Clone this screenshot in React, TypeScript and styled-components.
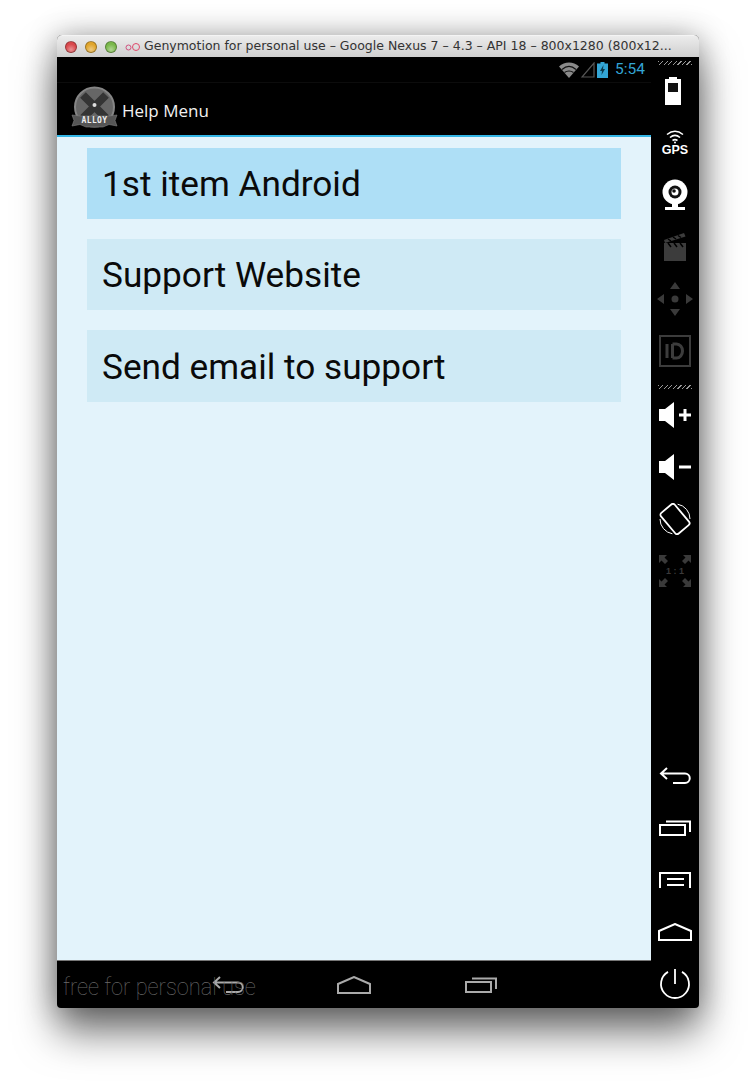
import React from 'react'
import styled, { createGlobalStyle } from 'styled-components'

const GlobalStyle = createGlobalStyle`
  html, body {
    margin: 0;
    padding: 0;
    background: #fff;
    overflow: hidden;
  }
`

const Page = styled.div`
  width: 756px;
  height: 1087px;
  box-sizing: border-box;
  padding: 35px 57px 79px 57px;
`

const Window = styled.div`
  height: 973px;
  display: flex;
  flex-direction: column;
  border-radius: 5px 5px 4px 4px;
  background: #000;
  box-shadow: 0 24px 40px rgba(0, 0, 0, 0.55), 0 0 30px rgba(0, 0, 0, 0.3);
`

const TitleBar = styled.div`
  height: 22px;
  flex: none;
  display: flex;
  align-items: center;
  padding-left: 8px;
  border-radius: 5px 5px 0 0;
  background: linear-gradient(#ececec, #cfcfcf);
  border-top: 1px solid #f4f4f4;
  box-sizing: border-box;
`

const Light = styled.span<{ $tone: string }>`
  width: 12px;
  height: 12px;
  margin-right: 8px;
  border-radius: 50%;
  box-sizing: border-box;
  border: 1px solid rgba(0, 0, 0, 0.3);
  background: radial-gradient(circle at 50% 75%, #fff6 0, transparent 60%),
    ${({ $tone }) => $tone};
`

const TitleText = styled.span`
  margin-left: 3px;
  font: 12.5px/1 'DejaVu Sans', sans-serif;
  color: #333;
  white-space: nowrap;
`

const Body = styled.div`
  flex: 1;
  display: flex;
  min-height: 0;
`

const Screen = styled.div`
  width: 594px;
  flex: none;
  display: flex;
  flex-direction: column;
`

const StatusBar = styled.div`
  height: 26px;
  flex: none;
  display: flex;
  align-items: center;
  justify-content: flex-end;
  gap: 2px;
  padding-right: 6px;
  box-sizing: border-box;
  border-bottom: 1px solid #0c0c0c;
`

const Clock = styled.span`
  margin-left: 5px;
  font: 15.5px/1 Roboto, sans-serif;
  color: #33a5d5;
`

const ActionBar = styled.div`
  height: 54px;
  flex: none;
  display: flex;
  align-items: center;
  gap: 4px;
  padding-left: 14px;
  box-sizing: border-box;
  border-bottom: 2px solid #33b5e5;
`

const ActionTitle = styled.span`
  padding-top: 2px;
  font: 17px/1 'Open Sans', sans-serif;
  color: #f2f2f2;
`

const Content = styled.div`
  flex: 1;
  display: flex;
  flex-direction: column;
  gap: 20px;
  padding: 11px 30px;
  background: #e3f3fb;
`

const MenuItem = styled.div<{ $active?: boolean; $tall?: boolean }>`
  height: ${({ $tall }) => ($tall ? 72 : 71)}px;
  box-sizing: border-box;
  display: flex;
  align-items: center;
  padding: 3px 0 0 15px;
  background: ${({ $active }) => ($active ? '#aedff6' : '#cfeaf5')};
  font: 35.2px/1 Roboto, sans-serif;
  color: #0a0a0a;
`

const NavBar = styled.div`
  position: relative;
  height: 48px;
  flex: none;
  display: flex;
  align-items: center;
  justify-content: center;
  border-top: 1px solid #777;
  box-sizing: border-box;
`

const NavSlot = styled.div`
  width: 126.5px;
  display: flex;
  justify-content: center;
`

const Watermark = styled.span`
  position: absolute;
  left: 6px;
  top: 14px;
  font: 100 24px/1 Roboto, sans-serif;
  color: #6a6a6a;
  white-space: nowrap;
  transform: scaleX(0.91);
  transform-origin: left center;
`

const SidePanel = styled.div`
  width: 48px;
  flex: none;
  display: flex;
  flex-direction: column;
  align-items: center;
  border-radius: 0 0 4px 0;
`

const Grip = styled.div<{ $height: number }>`
  height: ${({ $height }) => $height}px;
  width: 34px;
  flex: none;
  background: repeating-linear-gradient(
      135deg,
      #999 0 1px,
      transparent 1px 3.2px
    )
    bottom / 100% 4px no-repeat;
`

const SideSlot = styled.div`
  height: 52px;
  flex: none;
  display: flex;
  align-items: center;
  justify-content: center;
`

const BottomGroup = styled.div`
  margin-top: auto;
  margin-bottom: -2px;
  display: flex;
  flex-direction: column;
  align-items: center;
`

const GpsText = styled.text`
  font: bold 12.5px 'Liberation Sans', sans-serif;
  fill: #fff;
`

const LogoText = styled.text`
  font: bold 8px 'DejaVu Sans Mono', monospace;
  fill: #eee;
  letter-spacing: 0.4px;
`

const OneToOne = styled.text`
  font: bold 9px 'Liberation Sans', sans-serif;
  fill: #3a3a3a;
`

const AlloyLogo = () => (
  <svg width="47" height="46" viewBox="0 0 47 46">
    <circle cx="23.500" cy="21" r="19.500" fill="#666" stroke="#858585" strokeWidth="2" />
    <path d="M12 9l23 23M35 9L12 32" stroke="#343434" strokeWidth="8" />
    <circle cx="23.500" cy="19" r="2" fill="#ddd" />
    <path d="M1 29l8 1h29l8-1-2 5.500 2 5.500-8-1.500-6 2.500H15l-6-2.500L1 40l2-5.500z" fill="#555" stroke="#808080" strokeWidth=".6" />
    <LogoText x="23.500" y="37" textAnchor="middle">ALLOY</LogoText>
  </svg>
)

const WifiIcon = () => (
  <svg width="20" height="16" viewBox="0 0 20 16">
    <path d="M0 4.500C5.500 -1 14.500 -1 20 4.500L10 16z" fill="#8a8a8a" />
    <path d="M3 7.500C7.500 3.500 12.500 3.500 17 7.500M5.500 10.500C8 8.500 12 8.500 14.500 10.500" stroke="#111" strokeWidth="1.200" fill="none" />
  </svg>
)

const SignalIcon = () => (
  <svg width="14" height="16" viewBox="0 0 14 16">
    <path d="M13 1v14H1z" fill="none" stroke="#555" strokeWidth="1.200" />
  </svg>
)

const StatusBattery = () => (
  <svg width="11" height="16" viewBox="0 0 11 16">
    <path d="M3.500 0h4v1.500H11V16H0V1.500h3.500z" fill="#33a5d5" />
    <path d="M6.500 3L3 9h2l-.5 4L8 7H6z" fill="#0b3a4d" />
  </svg>
)

const BatteryIcon = () => (
  <svg width="20" height="28" viewBox="0 0 20 28">
    <path d="M4 0h8v2h4v26H0V2h4z" fill="#fff" />
    <rect x="3" y="6" width="10" height="9" fill="#111" />
  </svg>
)

const GpsIcon = () => (
  <svg width="28" height="26" viewBox="0 0 28 26">
    <path d="M6 4.500c5-4 11-4 16 0M9 7.500c3-2.500 7-2.500 10 0M11.500 10.500c1.500-1 3.500-1 5 0" fill="none" stroke="#fff" strokeWidth="1.600" />
    <circle cx="14" cy="12.500" r="1" fill="#fff" />
    <GpsText x="14" y="24" textAnchor="middle">GPS</GpsText>
  </svg>
)

const CameraIcon = () => (
  <svg width="26" height="32" viewBox="0 0 26 32">
    <circle cx="13" cy="13" r="12.500" fill="#fff" />
    <circle cx="13" cy="13" r="6.500" fill="#111" />
    <circle cx="13" cy="13" r="3.500" fill="#fff" />
    <circle cx="12" cy="12" r="1.800" fill="#111" />
    <rect x="10" y="25" width="6" height="3" fill="#fff" />
    <rect x="3" y="28" width="20" height="3" fill="#fff" />
  </svg>
)

const ClapIcon = () => (
  <svg width="24" height="30" viewBox="0 0 24 30">
    <rect x="1" y="11" width="22" height="18" fill="#3c3c3c" />
    <path d="M1 8L21 1l1.500 3.500L2 11z" fill="#3c3c3c" />
    <path d="M5 7l3 2M10 5l3 2M15 3.500l3 2M5 11l3 4M11 11l3 4M17 11l3 4" stroke="#000" strokeWidth="1.500" />
  </svg>
)

const DpadIcon = () => (
  <svg width="36" height="34" viewBox="0 0 36 34">
    <path d="M18 0l5 7H13zM18 34l-5-7h10zM0 17l7-5v10zM36 17l-7 5V12z" fill="#3a3a3a" />
    <circle cx="18" cy="17" r="3.500" fill="#3a3a3a" />
  </svg>
)

const IdIcon = () => (
  <svg width="32" height="32" viewBox="0 0 32 32">
    <rect x="1" y="1" width="30" height="30" fill="none" stroke="#3c3c3c" strokeWidth="2" />
    <path d="M8 9v14M13.500 9v14M13.500 9h4a6 7 0 0 1 0 14h-4" fill="none" stroke="#3c3c3c" strokeWidth="3" />
  </svg>
)

const VolumeIcon = ({ plus }: { plus?: boolean }) => (
  <svg width="32" height="26" viewBox="0 0 32 26">
    <path d="M0 7h6l9-7v26l-9-7H0z" fill="#fff" />
    <path d={plus ? 'M20 13h12M26 7v12' : 'M20 13h12'} stroke="#fff" strokeWidth="3" />
  </svg>
)

const RotateIcon = () => (
  <svg width="32" height="32" viewBox="0 0 32 32">
    <rect x="7" y="2.500" width="18" height="27" rx="2.500" transform="rotate(-40 16 16)" fill="none" stroke="#fff" strokeWidth="1.800" />
    <path d="M18.600 1.200A15 15 0 0 1 31 16M13.400 30.800A15 15 0 0 1 1 16" fill="none" stroke="#fff" strokeWidth="1" />
  </svg>
)

const RatioIcon = () => (
  <svg width="34" height="34" viewBox="0 0 34 34">
    <path d="M1 1h8L6.500 3.500 10 7l-3 3-3.500-3.500L1 9zM33 1v8L30.500 6.500 27 10l-3-3 3.500-3.500L25 1zM1 33v-8l2.500 2.500L7 24l3 3-3.500 3.500L9 33zM33 33h-8l2.500-2.500L24 27l3-3 3.500 3.500L33 25z" fill="#3a3a3a" />
    <OneToOne x="17" y="20" textAnchor="middle">1 : 1</OneToOne>
  </svg>
)

const BackIcon = ({ tone = '#fff' }: { tone?: string }) => (
  <svg width="32" height="18" viewBox="0 0 32 18">
    <path d="M8 1L2 6.500l6 5.500M2 6.500h24a4.500 4.500 0 0 1 0 9.500H14" fill="none" stroke={tone} strokeWidth="2" />
  </svg>
)

const RecentsIcon = ({ tone = '#fff' }: { tone?: string }) => (
  <svg width="32" height="16" viewBox="0 0 32 16">
    <rect x="1" y="5" width="25" height="10" fill="none" stroke={tone} strokeWidth="2" />
    <path d="M7 1.500h24V12" fill="none" stroke={tone} strokeWidth="2" />
  </svg>
)

const MenuIcon = () => (
  <svg width="32" height="16" viewBox="0 0 32 16">
    <path d="M1 16V1h30v15" fill="none" stroke="#fff" strokeWidth="2" />
    <path d="M8 7h17M8 13h17" stroke="#fff" strokeWidth="2" />
  </svg>
)

const HomeIcon = ({ tone = '#fff' }: { tone?: string }) => (
  <svg width="34" height="18" viewBox="0 0 34 18">
    <path d="M1 8L17 1l16 7v9H1z" fill="none" stroke={tone} strokeWidth="2" />
  </svg>
)

const PowerIcon = () => (
  <svg width="32" height="32" viewBox="0 0 32 32">
    <path d="M9 3.900a14 14 0 1 0 14 0" fill="none" stroke="#fff" strokeWidth="1.800" />
    <path d="M16 1v15" stroke="#fff" strokeWidth="1.800" />
  </svg>
)

const topIcons = [
  <BatteryIcon key="battery" />,
  <GpsIcon key="gps" />,
  <CameraIcon key="camera" />,
  <ClapIcon key="clap" />,
  <DpadIcon key="dpad" />,
  <IdIcon key="id" />,
]

const middleIcons = [
  <VolumeIcon key="up" plus />,
  <VolumeIcon key="down" />,
  <RotateIcon key="rotate" />,
  <RatioIcon key="ratio" />,
]

const bottomIcons = [
  <BackIcon key="back" />,
  <RecentsIcon key="recents" />,
  <MenuIcon key="menu" />,
  <HomeIcon key="home" />,
  <PowerIcon key="power" />,
]

export default function App() {
  return (
    <Page>
      <GlobalStyle />
      <Window>
        <TitleBar>
          <Light $tone="#d9484c" />
          <Light $tone="#e0a52c" />
          <Light $tone="#79b84a" />
          <svg width="16" height="8" viewBox="0 0 16 8">
            <circle cx="3.500" cy="4.500" r="2.500" fill="none" stroke="#d0517f" />
            <circle cx="11" cy="4" r="3.500" fill="none" stroke="#e0486a" />
          </svg>
          <TitleText>Genymotion for personal use – Google Nexus 7 – 4.3 – API 18 – 800x1280 (800x12...</TitleText>
        </TitleBar>
        <Body>
          <Screen>
            <StatusBar>
              <WifiIcon />
              <SignalIcon />
              <StatusBattery />
              <Clock>5:54</Clock>
            </StatusBar>
            <ActionBar>
              <AlloyLogo />
              <ActionTitle>Help Menu</ActionTitle>
            </ActionBar>
            <Content>
              <MenuItem $active>1st item Android</MenuItem>
              <MenuItem>Support Website</MenuItem>
              <MenuItem $tall>Send email to support</MenuItem>
            </Content>
            <NavBar>
              <NavSlot><BackIcon tone="#aaa" /></NavSlot>
              <NavSlot><HomeIcon tone="#aaa" /></NavSlot>
              <NavSlot><RecentsIcon tone="#aaa" /></NavSlot>
              <Watermark>free for personal use</Watermark>
            </NavBar>
          </Screen>
          <SidePanel>
            <Grip $height={8} />
            {topIcons.map((icon) => <SideSlot key={icon.key}>{icon}</SideSlot>)}
            <Grip $height={12} />
            {middleIcons.map((icon) => <SideSlot key={icon.key}>{icon}</SideSlot>)}
            <BottomGroup>
              {bottomIcons.map((icon) => <SideSlot key={icon.key}>{icon}</SideSlot>)}
            </BottomGroup>
          </SidePanel>
        </Body>
      </Window>
    </Page>
  )
}
